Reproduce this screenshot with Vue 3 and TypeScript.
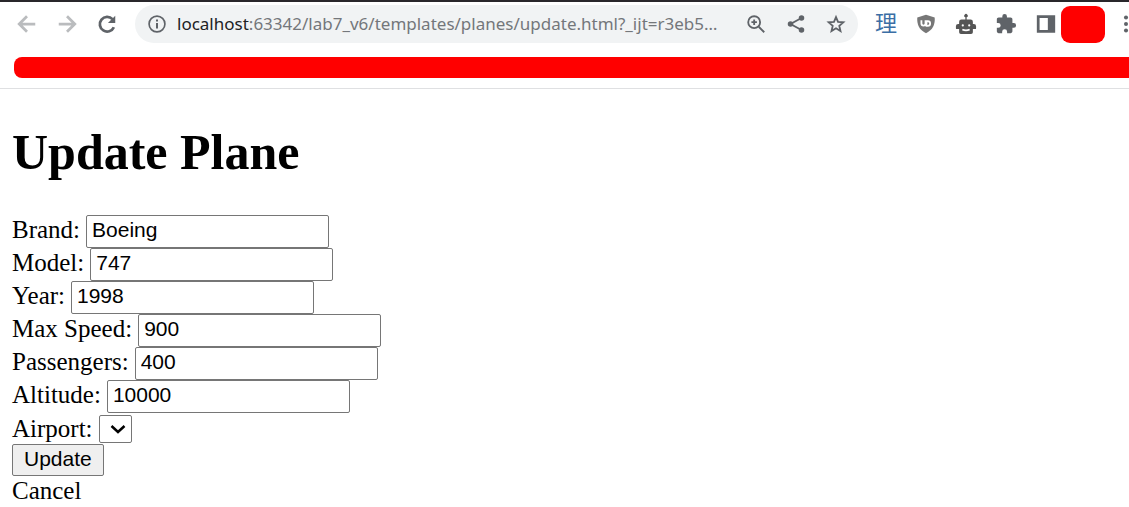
<script setup lang="ts">
import { ref } from 'vue'

interface Field {
  id: string
  label: string
  value: string
}

const fields = ref<Field[]>([
  { id: 'brand', label: 'Brand:', value: 'Boeing' },
  { id: 'model', label: 'Model:', value: '747' },
  { id: 'year', label: 'Year:', value: '1998' },
  { id: 'speed', label: 'Max Speed:', value: '900' },
  { id: 'passengers', label: 'Passengers:', value: '400' },
  { id: 'altitude', label: 'Altitude:', value: '10000' },
])
const airport = ref('')
</script>

<template>
  <div class="browser">
    <header class="chrome">
      <div class="toolbar">
        <nav class="navigation">
          <button class="icon faded" aria-label="Back">
            <svg viewBox="0 0 24 24"><path class="line" d="M21 12H4M12 3.500L3.500 12l8.500 8.500" /></svg>
          </button>
          <button class="icon faded" aria-label="Forward">
            <svg viewBox="0 0 24 24"><path class="line" d="M3 12h17M12 3.500l8.500 8.500-8.500 8.500" /></svg>
          </button>
          <button class="icon" aria-label="Reload">
            <svg viewBox="0 0 24 24"><path class="line thick" d="M19.500 15.500A8 8 0 1 1 18 6.700" /><path d="M21 3v8h-8z" /></svg>
          </button>
        </nav>
        <div class="address">
          <button class="icon small" aria-label="Site information">
            <svg viewBox="0 0 24 24"><circle class="line" cx="12" cy="12" r="9.500" /><path d="M10.800 6.500h2.400v2.400h-2.400zM10.800 10.800h2.400v6.700h-2.400z" /></svg>
          </button>
          <span class="url"><span class="host">localhost</span>:63342/lab7_v6/templates/planes/update.html?_ijt=r3eb5…</span>
          <button class="icon" aria-label="Zoom">
            <svg viewBox="0 0 24 24"><circle class="line" cx="10" cy="10" r="6.500" /><path class="line" d="M15 15l6 6M7 10h6M10 7v6" /></svg>
          </button>
          <button class="icon" aria-label="Share">
            <svg viewBox="0 0 24 24"><path class="line" d="M18 5.500L6 12l12 6.500" /><circle cx="18" cy="5.500" r="3" /><circle cx="6" cy="12" r="3" /><circle cx="18" cy="18.500" r="3" /></svg>
          </button>
          <button class="icon" aria-label="Bookmark">
            <svg viewBox="0 0 24 24"><path class="line" d="M12 4.500l2.200 5.200 5.800.500-4.400 3.800 1.300 5.700-4.900-3-4.900 3L8.400 14 4 10.200l5.800-.500z" /></svg>
          </button>
        </div>
        <div class="extensions">
          <button class="icon kanji" aria-label="Dictionary">理</button>
          <button class="icon shield" aria-label="Content blocker">
            <svg viewBox="0 0 24 24"><path d="M12 2l9.500 3c.500 8-2 13.500-9.500 17C4.500 18.500 2 13 2.500 5z" /><path class="mark" d="M7 8v3.500a2 2 0 0 0 4.500 0V8M12.500 9H14a2.400 2.400 0 0 1 0 5h-1.500z" /></svg>
          </button>
          <button class="icon robot" aria-label="Automation">
            <svg viewBox="0 0 24 24"><path d="M11.300 7V4.700a1.900 1.900 0 1 1 1.400 0V7H17q2.500 0 2.500 2.500V12h1q2.500 0 2.500 2.500v2q0 1-1 1h-2.500V21q0 2-2 2h-11q-2 0-2-2v-3.500H2q-1 0-1-1v-2Q1 12 3.500 12h1V9.500Q4.500 7 7 7z" /><path class="mark" d="M8 18q4 2 8 0" /><circle class="light" cx="8.500" cy="13.500" r="1.200" /><circle class="light" cx="15.500" cy="13.500" r="1.200" /></svg>
          </button>
          <button class="icon" aria-label="Extensions">
            <svg viewBox="0 0 24 24"><path d="M20.500 11H19V7c0-1.100-.900-2-2-2h-4V3.500a2.500 2.500 0 0 0-5 0V5H4c-1.100 0-2 .900-2 2v3.800h1.500a2.700 2.700 0 0 1 0 5.400H2V20c0 1.100.900 2 2 2h3.800v-1.500a2.700 2.700 0 0 1 5.400 0V22H17c1.100 0 2-.900 2-2v-4h1.500a2.500 2.500 0 0 0 0-5z" /></svg>
          </button>
          <button class="icon" aria-label="Side panel">
            <svg viewBox="0 0 24 24"><path fill-rule="evenodd" d="M2 2.500h20v19H2zM5 5.500v13h9v-13z" /></svg>
          </button>
          <span class="account"></span>
          <button class="icon menu" aria-label="Menu">
            <svg viewBox="0 0 24 24"><circle cx="12" cy="5" r="2.200" /><circle cx="12" cy="12" r="2.200" /><circle cx="12" cy="19" r="2.200" /></svg>
          </button>
        </div>
      </div>
      <div class="bookmarks"></div>
    </header>

    <main class="page">
      <h1>Update Plane</h1>
      <form @submit.prevent>
        <div v-for="field in fields" :key="field.id" class="row">
          <label :for="field.id">{{ field.label }}</label>
          <input :id="field.id" v-model="field.value" type="text" />
        </div>
        <div class="row airport">
          <label for="airport">Airport:</label>
          <span class="select">
            <select id="airport" v-model="airport"></select>
            <svg class="chevron" viewBox="0 0 16 16"><path d="M1.500 5L8 11l6.500-6" /></svg>
          </span>
        </div>
        <button class="submit" type="submit">Update</button>
      </form>
      <a class="cancel" href="#">Cancel</a>
    </main>
  </div>
</template>

<style>
body {
  margin: 0;
  background: #fff;
}
</style>

<style scoped>
.browser {
  overflow: hidden;
  font-family: "Liberation Serif", "Times New Roman", serif;
  color: #000;
}
.chrome {
  border-top: 2px solid #29272b;
  border-bottom: 1px solid #dfe0e2;
}
.toolbar {
  display: flex;
  align-items: center;
  height: 44px;
  padding-left: 16px;
}
.navigation,
.extensions {
  display: flex;
  flex: none;
  align-items: center;
  gap: 18px;
}
.navigation {
  margin-right: 17px;
}
.icon {
  flex: none;
  width: 22px;
  height: 22px;
  padding: 0;
  border: 0;
  background: none;
  color: #5f6368;
}
.icon svg {
  display: block;
  width: 100%;
  height: 100%;
  fill: currentColor;
}
.icon .line {
  fill: none;
  stroke: currentColor;
  stroke-width: 2;
}
.icon .thick {
  stroke-width: 3;
}
.icon .mark {
  fill: none;
  stroke: #fff;
  stroke-width: 2;
}
.icon .light {
  fill: #fff;
}
.faded {
  color: #babcbe;
}
.faded .line {
  stroke-width: 3;
}
.address {
  display: flex;
  flex: 1;
  align-items: center;
  gap: 18px;
  min-width: 0;
  height: 38px;
  padding: 0 11px 0 12px;
  border-radius: 19px;
  background: #f1f3f4;
}
.small {
  width: 20px;
  height: 20px;
}
.url {
  flex: 1;
  min-width: 0;
  margin: 0 -8px;
  font-family: "Noto Sans", "Open Sans", sans-serif;
  font-size: 17px;
  line-height: 28px;
  color: #74777b;
  white-space: nowrap;
}
.host {
  color: #202124;
}
.extensions {
  margin-left: 17px;
}
.icon.kanji {
  height: 28px;
  padding-bottom: 6px;
  font-family: "Noto Sans CJK JP", sans-serif;
  font-size: 22px;
  font-weight: 400;
  line-height: 22px;
  color: #3b6ea5;
}
.shield {
  color: #777;
}
.robot {
  color: #555;
}
.account {
  width: 44px;
  height: 37px;
  margin-left: -14px;
  border-radius: 9px;
  background: #f00;
}
.menu {
  margin: 0 -8px;
}
.bookmarks {
  height: 21px;
  margin: 11px 0 10px 14px;
  border-radius: 8px 0 0 8px;
  background: #f00;
}
.page {
  padding: 0 12px;
  font-size: 25px;
  line-height: 29px;
}
h1 {
  margin: 34px 0;
  font-size: 50px;
  line-height: 58px;
}
.row {
  display: flex;
  align-items: flex-start;
  gap: 6px;
  height: 33px;
}
.airport {
  height: 29px;
  padding: 2px 0 0;
}
.airport label {
  line-height: 27px;
}
input,
select,
.submit {
  box-sizing: border-box;
  margin: 0;
  border: 1px solid #767676;
  border-radius: 2px;
  background: #fff;
  font-family: "Liberation Sans", Arial, sans-serif;
  font-size: 21px;
  line-height: 24px;
  color: #000;
}
input {
  width: 243px;
  height: 33px;
  padding: 0 5px 3px;
}
.select {
  position: relative;
  display: block;
}
select {
  display: block;
  width: 33px;
  height: 28px;
  appearance: none;
}
.chevron {
  position: absolute;
  top: 6px;
  right: 6px;
  width: 16px;
  height: 16px;
  fill: none;
  stroke: #000;
  stroke-width: 2.500;
  pointer-events: none;
}
.submit {
  display: block;
  height: 32px;
  padding: 0 11px 2px;
  background: #efefef;
}
.cancel {
  color: inherit;
  text-decoration: none;
}
</style>
